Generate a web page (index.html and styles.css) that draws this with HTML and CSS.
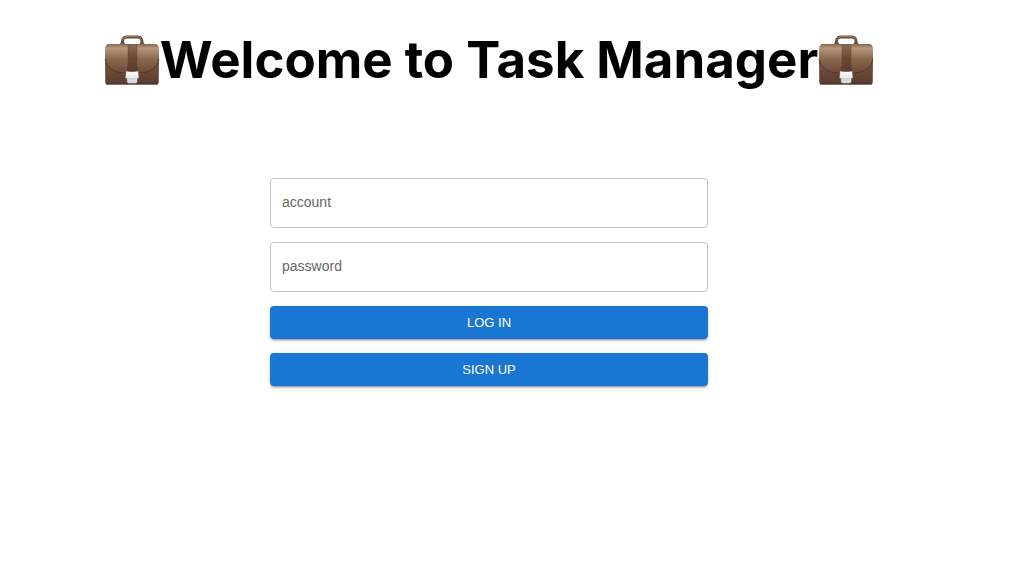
FILE: index.html
```html
<!DOCTYPE html>
<html lang="en">
<head>
<meta charset="utf-8">
<meta name="viewport" content="width=device-width, initial-scale=1">
<title>Task Manager</title>
<link rel="stylesheet" href="styles.css">
</head>
<body>
<svg class="symbols" aria-hidden="true">
  <defs>
    <linearGradient id="body-fill" x1="0" y1="0" x2="0" y2="1">
      <stop offset="0" stop-color="#8a6a55"/>
      <stop offset="0.4" stop-color="#76543f"/>
      <stop offset="1" stop-color="#593b2e"/>
    </linearGradient>
    <linearGradient id="flap-fill" x1="0" y1="0" x2="0" y2="1">
      <stop offset="0" stop-color="#93735c"/>
      <stop offset="0.14" stop-color="#b3957b"/>
      <stop offset="0.5" stop-color="#8b6850"/>
      <stop offset="1" stop-color="#6b4939"/>
    </linearGradient>
    <linearGradient id="strap-fill" x1="0" y1="0" x2="0" y2="1">
      <stop offset="0" stop-color="#8c6b53"/>
      <stop offset="0.5" stop-color="#6b4834"/>
      <stop offset="1" stop-color="#5c3b2c"/>
    </linearGradient>
    <linearGradient id="lock-fill" x1="0" y1="0" x2="0" y2="1">
      <stop offset="0" stop-color="#ffffff"/>
      <stop offset="0.5" stop-color="#ebebec"/>
      <stop offset="1" stop-color="#d2d2d4"/>
    </linearGradient>
    <symbol id="briefcase" viewBox="0 0 56 56">
      <path d="M18.500 12V9Q18.800 5.500 22.500 5H34Q37.700 5.500 38 9V12" fill="none" stroke="#6b4a38" stroke-width="2.800"/>
      <path d="M19 8Q20 4.800 23 4.400H33.500Q36.500 4.800 37.500 8" fill="none" stroke="#a68973" stroke-width="0.900"/>
      <path d="M16.500 12.500V10.800H20.500V12.500M36 12.500V10.800H40V12.500" fill="#7d5945" stroke="#5c3f2f" stroke-width="0.500"/>
      <path d="M4.500 12.300H51.500Q54 12.300 54.500 15L55 29L54.700 50.500Q54.500 52.500 52.500 52.500H3.500Q1.500 52.500 1.300 50.500L1 29L1.500 15Q2 12.300 4.500 12.300Z" fill="url(#body-fill)"/>
      <path d="M4.500 12.300H51.500Q54 12.300 54.500 15L55 27Q52.500 38 41 40.500Q28 42.500 15 40.500Q3.500 38 1 27L1.500 15Q2 12.300 4.500 12.300Z" fill="url(#flap-fill)"/>
      <path d="M1 27Q3.500 38 15 40.500Q28 42.500 41 40.500Q52.500 38 55 27" fill="none" stroke="#50352a" stroke-width="0.800"/>
      <path d="M24 12.500H33V33L34 36V40H23V36L24 33Z" fill="url(#strap-fill)" stroke="#63432f" stroke-width="0.400"/>
      <path d="M3 12.800H53" stroke="#806350" stroke-width="0.800"/>
      <path d="M2 52H54" stroke="#462c21" stroke-width="0.800"/>
      <path d="M22.300 39.500Q28 40.500 34 39.500L34.500 46H33V50Q32.800 51 31.500 51H25Q23.500 51 23.300 50V46H21.800Z" fill="url(#lock-fill)" stroke="#dededf" stroke-width="0.500"/>
      <path d="M24.500 46.500Q28 48 32 46.500" fill="none" stroke="#b8b8bb" stroke-width="0.700"/>
    </symbol>
  </defs>
</svg>
<main class="page">
  <h1 class="title">
    <svg class="title-icon" aria-hidden="true"><use href="#briefcase"/></svg>
    <span>Welcome to Task Manager</span>
    <svg class="title-icon" aria-hidden="true"><use href="#briefcase"/></svg>
  </h1>
  <form class="login-form">
    <input class="field" type="text" name="account" placeholder="account" aria-label="account" autocomplete="username">
    <input class="field" type="password" name="password" placeholder="password" aria-label="password" autocomplete="current-password">
    <button class="button" type="submit">LOG IN</button>
    <button class="button" type="button">SIGN UP</button>
  </form>
</main>
</body>
</html>
```
FILE: styles.css
```css
* {
  box-sizing: border-box;
}

body {
  margin: 0;
  background: #fff;
  font-family: "Liberation Sans", Arial, sans-serif;
}

.symbols {
  position: absolute;
  width: 0;
  height: 0;
}

.page {
  display: flex;
  flex-direction: column;
  align-items: center;
  gap: 85px;
  padding: 27px 34px 32px 0;
}

.title {
  display: flex;
  align-items: center;
  justify-content: center;
  margin: 0;
  color: #000;
  font: 700 51px/66px Inter, sans-serif;
  white-space: nowrap;
}

.title-icon {
  flex: none;
  width: 56px;
  height: 56px;
}

.login-form {
  display: flex;
  flex-direction: column;
  gap: 14px;
  width: 90%;
  max-width: 438px;
}

.field {
  width: 100%;
  height: 50px;
  padding: 0 11px 2px;
  border: 1px solid #c0c0c0;
  border-radius: 4px;
  background: #fff;
  color: #212121;
  font: 14px/20px "Liberation Sans", Arial, sans-serif;
}

.field::placeholder {
  color: #666;
  opacity: 1;
}

.button {
  padding: 6px 14px;
  border: 0;
  border-radius: 4px;
  background: #1976d2;
  box-shadow: 0 3px 1px -2px rgba(0, 0, 0, 0.2), 0 2px 2px rgba(0, 0, 0, 0.14), 0 1px 5px rgba(0, 0, 0, 0.12);
  color: #fff;
  font: 13px/21px "Liberation Sans", Arial, sans-serif;
  cursor: pointer;
}
```
